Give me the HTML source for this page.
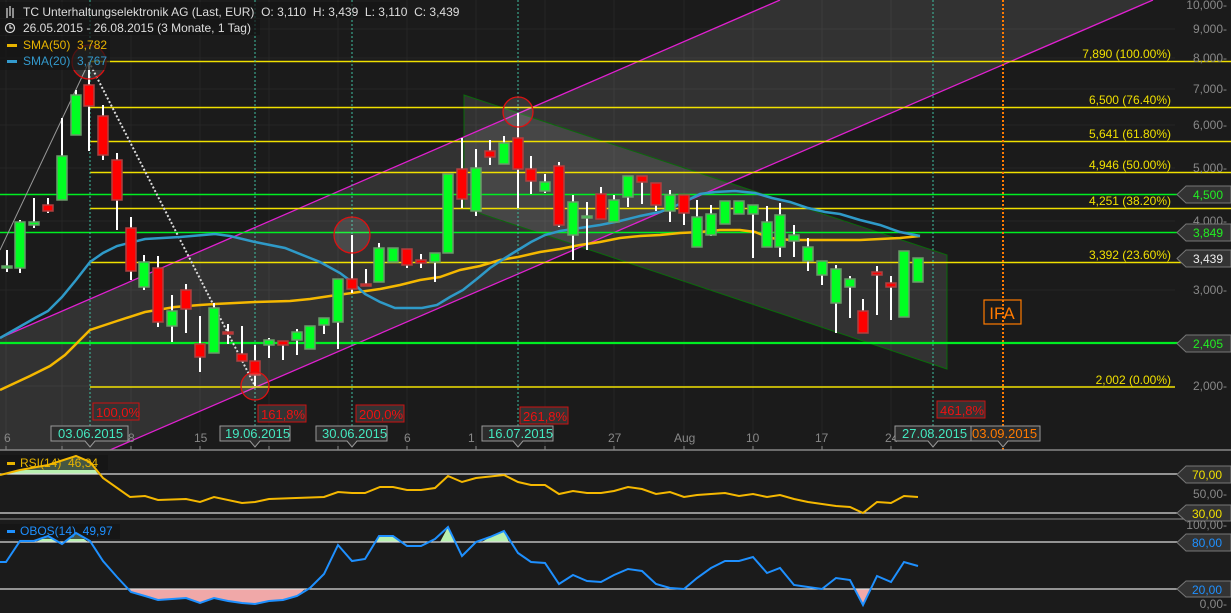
<!DOCTYPE html>
<html><head><meta charset="utf-8"><style>
html,body{margin:0;padding:0;background:#1b1b1b;}
svg{display:block;font-family:"Liberation Sans",sans-serif;}
text{white-space:pre;}
</style></head><body>
<svg width="1231" height="613" viewBox="0 0 1231 613" xmlns="http://www.w3.org/2000/svg" xml:space="preserve">
<rect width="1231" height="613" fill="#1b1b1b"/>
<g stroke="#262626" stroke-width="1">
<line x1="0" y1="29" x2="1175" y2="29"/><line x1="0" y1="58" x2="1175" y2="58"/><line x1="0" y1="89" x2="1175" y2="89"/><line x1="0" y1="125" x2="1175" y2="125"/><line x1="0" y1="168" x2="1175" y2="168"/><line x1="0" y1="221" x2="1175" y2="221"/><line x1="0" y1="290" x2="1175" y2="290"/><line x1="0" y1="386" x2="1175" y2="386"/>
<line x1="6" y1="0" x2="6" y2="450"/><line x1="62" y1="0" x2="62" y2="450"/><line x1="131" y1="0" x2="131" y2="450"/><line x1="200" y1="0" x2="200" y2="450"/><line x1="269" y1="0" x2="269" y2="450"/><line x1="338" y1="0" x2="338" y2="450"/><line x1="407" y1="0" x2="407" y2="450"/><line x1="476" y1="0" x2="476" y2="450"/><line x1="545" y1="0" x2="545" y2="450"/><line x1="614" y1="0" x2="614" y2="450"/><line x1="684" y1="0" x2="684" y2="450"/><line x1="753" y1="0" x2="753" y2="450"/><line x1="822" y1="0" x2="822" y2="450"/><line x1="891" y1="0" x2="891" y2="450"/>
</g>
<polygon points="0,338 780,0 1153,0 110,450 0,450" fill="#ffffff" fill-opacity="0.1"/>
<polygon points="464,95 947,255 947,369 464,208" fill="#ffffff" fill-opacity="0.1" stroke="#0a6a0a" stroke-width="1"/>
<line x1="0" y1="338" x2="780" y2="0" stroke="#e020d0" stroke-width="1.3"/>
<line x1="110" y1="450" x2="1153" y2="0" stroke="#e020d0" stroke-width="1.3"/>
<g stroke="#f0e000" stroke-width="1.5">
<line x1="90" y1="61.5" x2="1231" y2="61.5"/><line x1="90" y1="107.5" x2="1231" y2="107.5"/><line x1="90" y1="141.5" x2="1231" y2="141.5"/><line x1="90" y1="172.5" x2="1231" y2="172.5"/><line x1="90" y1="208.5" x2="1231" y2="208.5"/><line x1="90" y1="262.5" x2="1231" y2="262.5"/><line x1="90" y1="387" x2="1175" y2="387"/>
</g>
<g stroke="#00ee22"><line x1="0" y1="194.5" x2="1231" y2="194.5" stroke-width="1.5"/><line x1="0" y1="232.5" x2="1231" y2="232.5" stroke-width="1.5"/><line x1="0" y1="343" x2="1231" y2="343" stroke-width="2.2"/></g>
<g fill="#f0e000" font-size="12" text-anchor="end">
<text x="1171" y="58">7,890 (100.00%)</text><text x="1171" y="104">6,500 (76.40%)</text><text x="1171" y="138">5,641 (61.80%)</text><text x="1171" y="169">4,946 (50.00%)</text><text x="1171" y="205">4,251 (38.20%)</text><text x="1171" y="259">3,392 (23.60%)</text><text x="1171" y="384">2,002 (0.00%)</text>
</g>
<g stroke="#3fbfa0" stroke-width="1" stroke-dasharray="2,2">
<line x1="90" y1="0" x2="90" y2="430"/><line x1="255" y1="0" x2="255" y2="430"/><line x1="352" y1="0" x2="352" y2="430"/><line x1="518" y1="0" x2="518" y2="430"/><line x1="933" y1="0" x2="933" y2="430"/>
</g>
<line x1="1003" y1="0" x2="1003" y2="450" stroke="#ff7a00" stroke-width="2" stroke-dasharray="2,2"/>
<line x1="0" y1="250" x2="89" y2="62" stroke="#999" stroke-width="1"/>
<line x1="89" y1="62" x2="255" y2="386" stroke="#ddd" stroke-width="2" stroke-dasharray="2,2"/>
<polyline fill="none" stroke="#f5b800" stroke-width="2.5" points="0,390 30,376 50,366 65,355 80,340 90,330 117,321 145,312 175,307 200,305 215,304 255,302 290,301 310,299 330,296 352,293 380,289 400,285 420,280 440,277 460,270 480,266 500,260 518,257 540,252 560,249 580,245 600,242 620,238 640,236 660,235 680,233 700,232 720,230 740,230 755,232 770,238 790,240 820,240 860,240 900,238 920,236"/>
<polyline fill="none" stroke="#2f9ac8" stroke-width="2.5" points="0,338 35,318 48,311 62,297 76,280 90,262 103,253 117,246 145,239 180,237 215,234 230,236 255,242 285,248 320,262 340,273 352,282 365,294 380,302 395,308 422,308 437,305 450,297 463,290 478,278 490,268 505,258 518,250 531,242 545,235 560,231 580,228 600,225 620,221 640,216 660,212 680,204 700,194 715,192 735,191 755,193 772,198 790,202 808,208 825,212 840,214 860,220 880,225 900,232 920,236"/>
<g stroke="#fff" stroke-width="2">
<path d="M7 250V272M20 220V273M34 198V228M48 198V213M62 118V200M76 90V135M89 62V151M103 105V160M117 153V230M131 217V280M144 255V290M158 256V327M172 295V342M186 284V333M200 316V372M214 303V353M228 324V344M242 326V361M255 345V386M269 338V358M283 341V360M297 329V355M310 326V349M324 318V334M338 279V349M352 235V293M366 269V286M379 243V282M393 248V262M407 249V268M421 254V268M435 253V282M448 174V253M462 138V208M476 149V216M490 140V165M504 136V164M518 113V208M531 156V194M545 174V193M559 162V227M573 195V260M587 202V250M601 187V219M614 195V222M628 176V207M642 176V204M656 183V211M670 190V222M684 195V225M697 200V247M711 205V236M725 201V224M739 201V214M753 205V258M767 206V247M780 203V257M794 225V257M808 238V271M822 261V285M836 265V333M850 276V318M863 299V333M877 266V315M891 276V320M904 251V317M918 258V282"/>
</g>
<g fill="#00ff22" stroke="#6a9a6a" stroke-width="1.5">
<rect x="2" y="266" width="10" height="2"/><rect x="15" y="222" width="10" height="46"/><rect x="29" y="222" width="10" height="3"/><rect x="57" y="156" width="10" height="44"/><rect x="71" y="95" width="10" height="40"/><rect x="139" y="262" width="10" height="25"/><rect x="167" y="311" width="10" height="15"/><rect x="209" y="308" width="10" height="45"/><rect x="264" y="340" width="10" height="5"/><rect x="292" y="332" width="10" height="8"/><rect x="305" y="326" width="10" height="23"/><rect x="319" y="318" width="10" height="7"/><rect x="333" y="279" width="10" height="43"/><rect x="374" y="248" width="10" height="34"/><rect x="388" y="248" width="10" height="14"/><rect x="430" y="253" width="10" height="9"/><rect x="443" y="174" width="10" height="79"/><rect x="471" y="168" width="10" height="43"/><rect x="499" y="143" width="10" height="21"/><rect x="540" y="182" width="10" height="9"/><rect x="568" y="202" width="10" height="33"/><rect x="582" y="216" width="10" height="2"/><rect x="609" y="200" width="10" height="22"/><rect x="623" y="176" width="10" height="21"/><rect x="665" y="195" width="10" height="16"/><rect x="692" y="217" width="10" height="30"/><rect x="706" y="214" width="10" height="21"/><rect x="720" y="201" width="10" height="23"/><rect x="734" y="201" width="10" height="13"/><rect x="748" y="205" width="10" height="9"/><rect x="762" y="222" width="10" height="25"/><rect x="775" y="215" width="10" height="32"/><rect x="789" y="235" width="10" height="6"/><rect x="803" y="247" width="10" height="14"/><rect x="817" y="261" width="10" height="14"/><rect x="831" y="269" width="10" height="34"/><rect x="845" y="279" width="10" height="8"/><rect x="899" y="251" width="10" height="66"/><rect x="913" y="258" width="10" height="24"/>
</g>
<g fill="#ff0000" stroke="#b04040" stroke-width="1.5">
<rect x="43" y="205" width="10" height="6"/><rect x="84" y="85" width="10" height="21"/><rect x="98" y="116" width="10" height="39"/><rect x="112" y="160" width="10" height="40"/><rect x="126" y="228" width="10" height="43"/><rect x="153" y="268" width="10" height="54"/><rect x="181" y="290" width="10" height="19"/><rect x="195" y="344" width="10" height="13"/><rect x="223" y="332" width="10" height="2"/><rect x="237" y="354" width="10" height="7"/><rect x="250" y="361" width="10" height="14"/><rect x="278" y="341" width="10" height="4"/><rect x="347" y="279" width="10" height="10"/><rect x="361" y="284" width="10" height="2"/><rect x="402" y="249" width="10" height="16"/><rect x="416" y="260" width="10" height="3"/><rect x="457" y="169" width="10" height="30"/><rect x="485" y="151" width="10" height="6"/><rect x="513" y="138" width="10" height="31"/><rect x="526" y="169" width="10" height="12"/><rect x="554" y="166" width="10" height="59"/><rect x="596" y="194" width="10" height="25"/><rect x="637" y="176" width="10" height="6"/><rect x="651" y="183" width="10" height="22"/><rect x="679" y="195" width="10" height="18"/><rect x="858" y="311" width="10" height="22"/><rect x="872" y="272" width="10" height="3"/><rect x="886" y="283" width="10" height="4"/>
</g>
<g fill="#ffffff" fill-opacity="0.12" stroke="#dd1111" stroke-width="1.3">
<circle cx="89" cy="62" r="17"/><circle cx="518" cy="112" r="15"/><circle cx="352" cy="235" r="18"/><circle cx="255" cy="386" r="14"/>
</g>
<rect x="984" y="300" width="37" height="24" fill="none" stroke="#ff7a00" stroke-width="1.2"/>
<text x="1002" y="319" fill="#ff7a00" font-size="17" text-anchor="middle">IFA</text>
<g font-size="13" fill="#ee1111">
<rect x="93" y="403" width="46" height="17" fill="#333" stroke="#cc1111"/><text x="96" y="417">100,0%</text>
<rect x="258" y="405" width="48" height="17" fill="#333" stroke="#cc1111"/><text x="261" y="419">161,8%</text>
<rect x="356" y="405" width="48" height="17" fill="#333" stroke="#cc1111"/><text x="359" y="419">200,0%</text>
<rect x="520" y="407" width="48" height="17" fill="#333" stroke="#cc1111"/><text x="523" y="421">261,8%</text>
<rect x="937" y="401" width="48" height="17" fill="#333" stroke="#cc1111"/><text x="940" y="415">461,8%</text>
</g>
<line x1="0" y1="450" x2="1231" y2="450" stroke="#888" stroke-width="1.5"/>
<g stroke="#888"><path d="M6 446V450M62 446V450M131 446V450M200 446V450M269 446V450M338 446V450M407 446V450M476 446V450M545 446V450M614 446V450M684 446V450M753 446V450M822 446V450M891 446V450"/></g>
<g fill="#888" font-size="12">
<text x="4" y="442">6</text><text x="128" y="442">8</text><text x="194" y="442">15</text><text x="404" y="442">6</text><text x="468" y="442">1</text><text x="608" y="442">27</text><text x="674" y="442">Aug</text><text x="746" y="442">10</text><text x="815" y="442">17</text><text x="885" y="442">24</text>
</g>
<g font-size="13" fill="#44e8c0">
<path d="M51 426H128V441H95L90 447L85 441H51Z" fill="#2c2c2c" stroke="#999"/><text x="58" y="438">03.06.2015</text>
<path d="M220 426H290V441H260L255 447L250 441H220Z" fill="#2c2c2c" stroke="#999"/><text x="225" y="438">19.06.2015</text>
<path d="M316 426H387V441H357L352 447L347 441H316Z" fill="#2c2c2c" stroke="#999"/><text x="322" y="438">30.06.2015</text>
<path d="M482 426H553V441H523L518 447L513 441H482Z" fill="#2c2c2c" stroke="#999"/><text x="488" y="438">16.07.2015</text>
<path d="M895 426H971V441H938L933 447L928 441H895Z" fill="#2c2c2c" stroke="#999"/><text x="902" y="438">27.08.2015</text>
<path d="M971 426H1040V441H1008L1003 447L998 441H971Z" fill="#2c2c2c" stroke="#999"/><text x="972" y="438" fill="#ff7a00">03.09.2015</text>
</g>
<g fill="#888" font-size="12" text-anchor="end">
<text x="1227" y="9">10,000-</text><text x="1227" y="33">9,000-</text><text x="1227" y="62">8,000-</text><text x="1227" y="93">7,000-</text><text x="1227" y="129">6,000-</text><text x="1227" y="172">5,000-</text><text x="1227" y="225">4,000-</text><text x="1227" y="294">3,000-</text><text x="1227" y="390">2,000-</text>
</g>
<g font-size="12" stroke="#777">
<path d="M1186 186H1231V203H1186L1177 194.5Z" fill="#333"/><text x="1193" y="199" fill="#22ee22" stroke="none">4,500</text>
<path d="M1186 224H1231V241H1186L1177 232.5Z" fill="#333"/><text x="1193" y="237" fill="#22ee22" stroke="none">3,849</text>
<path d="M1186 250H1231V267H1186L1177 258.5Z" fill="#333"/><text x="1193" y="263" fill="#eee" stroke="none">3,439</text>
<path d="M1186 335H1231V352H1186L1177 343.5Z" fill="#333"/><text x="1193" y="348" fill="#22ee22" stroke="none">2,405</text>
</g>
<rect x="0" y="2" width="400" height="16" fill="#141414" opacity="0.7"/>
<rect x="0" y="19" width="260" height="16" fill="#141414" opacity="0.7"/>
<rect x="0" y="36" width="110" height="34" fill="#141414" opacity="0.7"/>
<g stroke="#ddd" stroke-width="1.2" fill="none"><path d="M7 8V18M10 6V16M13 8V18"/><circle cx="10" cy="28" r="4.5"/><path d="M10 25V28H12.5"/></g>
<g font-size="12">
<text x="23" y="16" fill="#ddd">TC Unterhaltungselektronik AG (Last, EUR)  O: 3,110  H: 3,439  L: 3,110  C: 3,439</text>
<text x="23" y="32" fill="#ddd">26.05.2015 - 26.08.2015 (3 Monate, 1 Tag)</text>
<rect x="7" y="44" width="10" height="3" fill="#e8b400"/><text x="23" y="49" fill="#e8b400">SMA(50)  3,782</text>
<rect x="7" y="60" width="10" height="3" fill="#3399cc"/><text x="23" y="65" fill="#3399cc">SMA(20)  3,767</text>
</g>
<polygon points="0,474 0,475 20,470 48,465 76,456 90,462 98,474" fill="#b8f0b0"/>
<line x1="0" y1="474" x2="1231" y2="474" stroke="#ddd" stroke-width="1.3"/>
<line x1="0" y1="513" x2="1231" y2="513" stroke="#ddd" stroke-width="1.3"/>
<line x1="0" y1="519" x2="1231" y2="519" stroke="#777" stroke-width="1.3"/>
<rect x="0" y="455" width="108" height="15" fill="#141414" opacity="0.7"/>
<rect x="7" y="462" width="8" height="3" fill="#e8b400"/>
<text x="20" y="467" font-size="12" fill="#e8b400">RSI(14)  46,34</text>
<polyline fill="none" stroke="#f5b800" stroke-width="2" points="0,475 20,470 48,465 76,456 90,462 103,478 130,497 145,496 158,500 186,499 200,502 214,497 242,503 255,502 269,499 296,498 324,497 338,492 352,493 365,493 380,487 393,487 407,490 421,490 435,488 448,476 462,482 476,478 504,475 518,482 531,485 545,485 559,494 573,491 587,493 601,493 614,491 628,487 642,489 656,494 670,492 684,497 697,495 711,494 725,493 739,496 753,494 767,497 780,495 794,499 808,502 822,504 836,506 850,507 863,513 877,502 891,503 904,496 918,497"/>
<g font-size="12" stroke="#777">
<path d="M1186 466H1231V483H1186L1177 474.5Z" fill="#333"/><text x="1192" y="479" fill="#f0e000" stroke="none">70,00</text>
<path d="M1186 505H1231V521H1186L1177 513Z" fill="#333"/><text x="1192" y="518" fill="#f0e000" stroke="none">30,00</text>
</g>
<text x="1227" y="498" font-size="12" fill="#888" text-anchor="end">50,00-</text>
<polygon points="36,542 48,536 62,544 76,533 88,542" fill="#b8f0b0"/>
<polygon points="374,542 379,536 393,536 400,542" fill="#b8f0b0"/>
<polygon points="440,542 448,527 455,542" fill="#b8f0b0"/>
<polygon points="482,542 490,537 504,531 509,542" fill="#b8f0b0"/>
<polygon points="130,589 131,592 145,596 158,600 172,599 186,598 200,603 214,598 228,601 242,603 255,604 269,601 283,600 297,596 305,589" fill="#f0a8a8"/>
<polygon points="855,589 863,605 871,589" fill="#f0a8a8"/>
<line x1="0" y1="542" x2="1231" y2="542" stroke="#ddd" stroke-width="1.3"/>
<line x1="0" y1="589" x2="1231" y2="589" stroke="#ddd" stroke-width="1.3"/>
<rect x="0" y="524" width="120" height="15" fill="#141414" opacity="0.7"/>
<rect x="7" y="530" width="8" height="3" fill="#1e90ff"/>
<text x="20" y="535" font-size="12" fill="#1e90ff">OBOS(14)  49,97</text>
<polyline fill="none" stroke="#1e90ff" stroke-width="2" points="0,562 6,562 20,541 34,541 48,536 62,544 76,533 90,541 103,561 117,577 131,592 145,596 158,600 172,599 186,598 200,603 214,598 228,601 242,603 255,604 269,601 283,600 297,596 310,588 324,574 338,545 352,561 365,559 379,536 393,536 407,546 421,546 435,539 448,527 462,556 476,542 490,537 504,531 518,553 531,562 545,563 559,584 573,575 587,581 601,582 614,575 628,569 642,571 656,584 670,588 684,589 697,578 711,568 725,561 739,561 753,557 767,573 780,568 794,585 808,587 822,589 836,578 850,580 863,605 877,576 891,582 904,562 918,566"/>
<g font-size="12" stroke="#777">
<path d="M1186 534H1231V551H1186L1177 542.5Z" fill="#333"/><text x="1192" y="547" fill="#1e90ff" stroke="none">80,00</text>
<path d="M1186 581H1231V597H1186L1177 589Z" fill="#333"/><text x="1192" y="594" fill="#1e90ff" stroke="none">20,00</text>
</g>
<text x="1227" y="529" font-size="12" fill="#888" text-anchor="end">100,00-</text>
<text x="1227" y="608" font-size="12" fill="#888" text-anchor="end">0,00-</text>
</svg>
</body></html>
